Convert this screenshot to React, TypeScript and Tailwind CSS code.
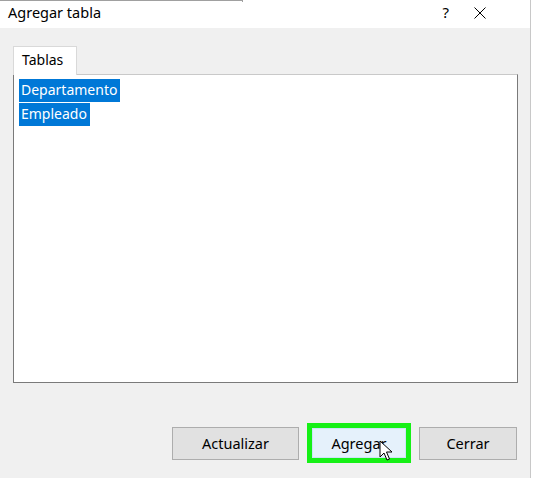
import React from 'react';

const font = { fontFamily: '"Noto Sans", "Open Sans", sans-serif' };

const Cursor = () => (
    <svg width="14" height="22" viewBox="0 0 14 22" className="absolute left-[379px] top-[440px]">
        <path d="M1 1 L1 17 L5 13 L8 20 L10.5 19 L7.5 12 L13 12 Z" fill="#fff" stroke="#000" strokeWidth="1" strokeLinejoin="round" />
    </svg>
);

export default function App() {
    const items = ['Departamento', 'Empleado'];

    return (
        <div className="relative w-[534px] h-[478px] bg-white overflow-hidden text-[#000]" style={font}>
            {/* edge of a window behind */}
            <div className="absolute left-0 top-0 w-[243px] h-[2px] border-t border-r border-[#a0a0a0]" />

            <div className="w-[531px] h-full flex flex-col bg-[#f0f0f0] border-r border-[#c8c8c8]">
                {/* title bar */}
                <div className="h-[28px] shrink-0 bg-white flex items-center pl-[8px] pr-[44px]">
                    <span className="text-[14.5px] leading-none -mt-[4px] flex-1">Agregar tabla</span>
                    <span className="text-[15px] leading-none -mt-[4px] mr-[25px]">?</span>
                    <svg width="12" height="12" viewBox="0 0 12 12" className="-mt-[3px]">
                        <path d="M0.5 0.5 L11.5 11.5 M11.5 0.5 L0.5 11.5" stroke="#000" strokeWidth="1" />
                    </svg>
                </div>

                {/* tab + list */}
                <div className="pt-[18px] pl-[13px] pr-[12px] flex flex-col">
                    <div className="flex">
                        <div className="w-[64px] h-[29px] bg-white border border-b-0 border-[#d9d9d9] pl-[8px] pt-[4px] text-[14px] leading-[18px] -mb-[1px] relative z-10">
                            Tablas
                        </div>
                    </div>
                    <div className="h-[309px] bg-white border border-[#7a7a7a] border-t-[#c9c9c9] pt-[4px] pl-[5px] flex flex-col items-start">
                        {items.map((name) => (
                            <div key={name} className="h-[23px] bg-[#0078d7] text-white text-[14px] leading-[22px] pl-[2px] pr-[3px] mb-[1px]">
                                {name}
                            </div>
                        ))}
                    </div>
                </div>

                {/* buttons */}
                <div className="mt-[40px] flex items-center pl-[172px] gap-[8px]">
                    <button className="w-[127px] h-[33px] bg-[#e1e1e1] border border-[#adadad] text-[14.5px] leading-none">
                        Actualizar
                    </button>
                    <div className="w-[104px] h-[40px] border-[5px] border-[#16f016] flex">
                        <button className="flex-1 bg-[#e5f1fb] border border-[#cce4f7] text-[14.5px] leading-none">
                            Agregar
                        </button>
                    </div>
                    <button className="w-[98px] h-[33px] bg-[#e1e1e1] border border-[#adadad] text-[14.5px] leading-none">
                        Cerrar
                    </button>
                </div>
            </div>

            <Cursor />
        </div>
    );
}
